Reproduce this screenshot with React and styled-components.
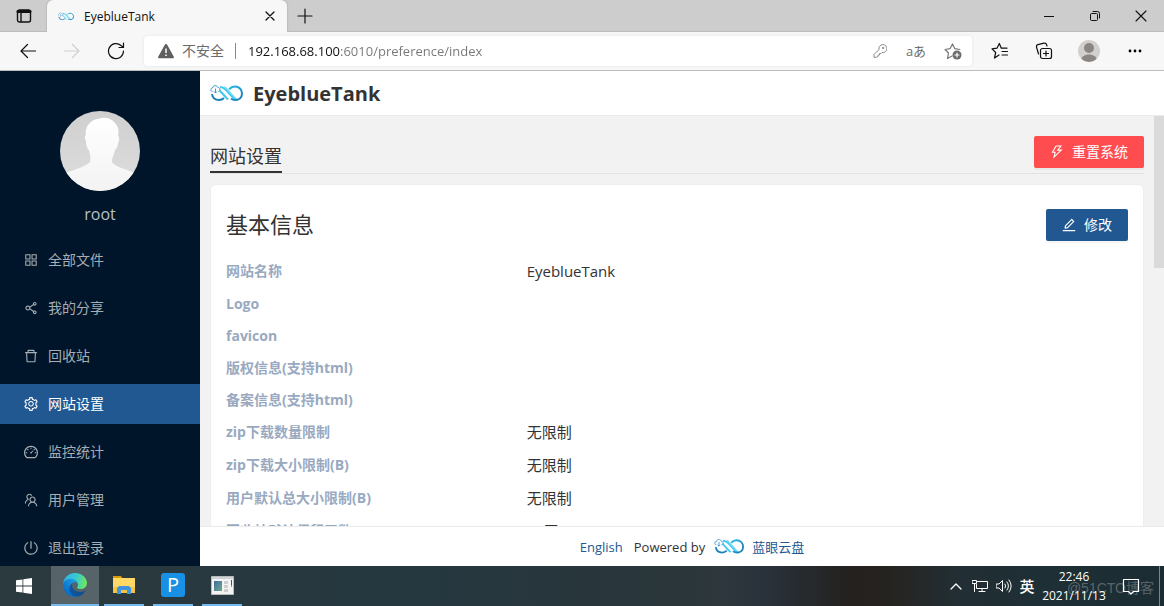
import React from "react";
import styled, { createGlobalStyle } from "styled-components";
import {
  AiOutlineAppstore,
  AiOutlineShareAlt,
  AiOutlineDelete,
  AiOutlineSetting,
  AiOutlineDashboard,
  AiOutlineTeam,
  AiOutlinePoweroff,
  AiOutlineThunderbolt,
  AiOutlineEdit
} from "react-icons/ai";

const GlobalStyle = createGlobalStyle`
  * {
    box-sizing: border-box;
  }
  body {
    margin: 0;
    font-family: "Open Sans", "Noto Sans CJK SC", sans-serif;
    font-size: 14px;
    color: #333;
  }
  button, input {
    font-family: inherit;
    border: 0;
    padding: 0;
    background: none;
    color: inherit;
  }
  svg {
    display: block;
    flex: none;
  }
  a {
    text-decoration: none;
  }
`;

const Screen = styled.div`
  display: flex;
  flex-direction: column;
  height: 100vh;
  overflow: hidden;
`;

/* browser */

const TabBar = styled.div`
  display: flex;
  flex: none;
  height: 32px;
  background: #cdcdcd;
  box-shadow: inset 0 -1px 0 #bcbcbc;
`;

const BarButton = styled.button`
  display: flex;
  align-items: center;
  justify-content: center;
  flex: none;
  width: ${props => props.$width}px;
  color: ${props => props.$color || "#111"};
`;

const Tab = styled.div`
  display: flex;
  align-items: center;
  width: 240px;
  padding: 0 6px 0 11px;
  background: #f7f7f7;
  border-radius: 6px 6px 0 0;
  box-shadow: 0 0 2px #999;
  font-size: 12px;
  color: #111;
  clip-path: inset(-3px -3px 0 -3px);
`;

const TabTitle = styled.span`
  flex: 1;
  margin-left: 10px;
`;

const Spacer = styled.div`
  flex: 1;
`;

const Toolbar = styled.div`
  display: flex;
  flex: none;
  height: 39px;
  padding: 0 6px;
  background: #f7f7f7;
  border-bottom: 1px solid #bdbdbd;
`;

const AddressBar = styled.div`
  display: flex;
  flex: 1;
  align-items: center;
  height: 30px;
  margin: 4px 6px;
  padding: 0 1px 0 14px;
  background: #fff;
  border-radius: 4px;
  box-shadow: 0 0 3px #e2e2e2;
`;

const Unsafe = styled.span`
  margin-left: 8px;
  padding-right: 11px;
  border-right: 1px solid #8a8a8a;
  line-height: 16px;
  color: #6b6b6b;
`;

const Url = styled.input`
  flex: 1;
  min-width: 0;
  margin-left: 12px;
  height: 24px;
  font-size: 13px;
  outline: 0;
  color: transparent;
  background: linear-gradient(90deg, #111 93px, #767676 93px);
  background-clip: text;
  -webkit-background-clip: text;
`;

const BarIcon = styled(BarButton)`
  height: 30px;
  font-size: 13px;
`;

/* page */

const Page = styled.div`
  display: flex;
  flex: 1;
  min-height: 0;
`;

const Sidebar = styled.aside`
  flex: none;
  width: 200px;
  overflow: hidden;
  background: #001529;
`;

const Profile = styled.div`
  display: flex;
  flex-direction: column;
  align-items: center;
  padding-top: 40px;
  height: 169px;
  font-size: 16px;
  line-height: 24px;
  color: #bbc0c5;
`;

const UserName = styled.div`
  margin-top: 11px;
`;

/* CJK glyphs sit low in their line box */
const Text = styled.span`
  padding-bottom: 2px;
`;

const MenuLink = styled.a`
  display: flex;
  align-items: center;
  gap: 9px;
  height: 40px;
  margin-bottom: 8px;
  padding-left: 23px;
  color: ${props => (props.$active ? "#fff" : "#a6adb4")};
  background: ${props => (props.$active ? "#215891" : "transparent")};
`;

const Content = styled.div`
  display: flex;
  flex: 1;
  flex-direction: column;
  min-width: 0;
`;

const SiteHeader = styled.header`
  display: flex;
  flex: none;
  align-items: center;
  gap: 10px;
  height: 45px;
  padding-left: 10px;
  background: #fff;
  border-bottom: 1px solid #ebebeb;
`;

const SiteName = styled.span`
  font-size: 20px;
  font-weight: 700;
`;

const Body = styled.div`
  display: flex;
  flex: 1;
  min-height: 0;
  background: #f2f2f2;
`;

const Main = styled.main`
  flex: 1;
  min-width: 0;
  padding: 20px 10px 0;
  overflow: hidden;
`;

const ScrollTrack = styled.div`
  width: 10px;
`;

const ScrollThumb = styled.div`
  height: 37%;
  background: #dadada;
`;

const TitleRow = styled.div`
  display: flex;
  justify-content: space-between;
  height: 38px;
  border-bottom: 1px solid #e3e3e3;
`;

const Title = styled.h1`
  align-self: flex-end;
  margin: 0;
  padding-bottom: 2px;
  border-bottom: 2px solid #333;
  font-size: 18px;
  font-weight: 400;
  line-height: 26px;
`;

const Button = styled.button`
  display: flex;
  align-items: center;
  gap: 7px;
  height: 32px;
  padding: 0 16px 0 15px;
  border-radius: 2px;
  background: ${props => (props.$danger ? "#ff4d4f" : "#215891")};
  color: #fff;
  font-size: 14px;
  box-shadow: 0 2px 0 rgba(0, 0, 0, 0.04);
`;

const Card = styled.section`
  margin-top: 10px;
  padding: 24px 15px;
  background: #fff;
  border: 1px solid #eee;
  border-radius: 6px;
`;

const CardHead = styled.div`
  display: flex;
  align-items: center;
  justify-content: space-between;
  margin-bottom: 14px;
`;

const CardTitle = styled.h2`
  margin: 0;
  padding-bottom: 2px;
  font-size: 22px;
  font-weight: 400;
  line-height: 30px;
`;

const InfoList = styled.dl`
  margin: 0;
`;

const InfoRow = styled.div`
  display: grid;
  grid-template-columns: 1fr 2fr;
  padding: 5px 0;
`;

const InfoLabel = styled.dt`
  font-weight: 700;
  line-height: 22px;
  color: #99a9bf;
`;

const InfoValue = styled.dd`
  margin: 0;
  font-size: 15px;
  line-height: 23px;
`;

const Footer = styled.footer`
  display: flex;
  flex: none;
  align-items: center;
  justify-content: center;
  height: 40px;
  padding-left: 20px;
  background: #fff;
  border-top: 1px solid #ebebeb;
  font-size: 13px;
`;

const FooterLink = styled.a`
  display: flex;
  align-items: center;
  gap: 8px;
  color: #215891;
`;

const Powered = styled.span`
  margin: 0 9px 0 11px;
`;

/* taskbar */

const Taskbar = styled.div`
  position: relative;
  display: flex;
  flex: none;
  height: 40px;
  color: #fff;
  background: linear-gradient(
    90deg,
    #2b3a3e 0%,
    #25373f 36%,
    #2a363a 58%,
    #2d373c 62%,
    #29313a 66%,
    #24211f 73%,
    #26231f 76%,
    #222e33 82%,
    #1e2f36 90%,
    #1c2c33 100%
  );
`;

const StartButton = styled(BarButton)`
  margin-right: 3px;
`;

const Task = styled.button`
  display: flex;
  flex-direction: column;
  align-items: center;
  width: 48px;
  height: 40px;
  margin-right: 1px;
  background: ${props => (props.$active ? "#56646a" : "transparent")};

  &::after {
    content: "";
    width: ${props => (props.$active ? 48 : 40)}px;
    height: 2px;
    background: #76b9ed;
  }
`;

const TaskIcon = styled.span`
  display: flex;
  flex: 1;
  align-items: center;
`;

const Clock = styled.div`
  width: 72px;
  font-size: 12px;
  line-height: 19px;
  padding-top: 1px;
  text-align: center;
`;

const Ime = styled(BarButton)`
  padding-bottom: 2px;
  font-size: 15px;
  font-weight: 500;
`;

const ShowDesktop = styled.button`
  width: 5px;
  margin-left: 7px;
  border-left: 1px solid #7c868a;
`;

const Watermark = styled.span`
  position: absolute;
  right: 10px;
  bottom: 8px;
  font-family: "Liberation Sans", "Noto Sans CJK SC", sans-serif;
  font-size: 14px;
  line-height: 20px;
  color: rgba(255, 255, 255, 0.27);
  pointer-events: none;
`;

const Logo = ({ width, id }) => (
  <svg width={width} viewBox="0 0 66 36" fill="none" strokeWidth="4">
    <defs>
      <linearGradient id={id} x1="0" x2="1" y1="0" y2="1">
        <stop offset="0" stopColor="#2cc0ee" />
        <stop offset="1" stopColor="#1673ae" />
      </linearGradient>
    </defs>
    <path d="M4 20c1 8 7 12 14 12 4 0 7-1 10-4" stroke="#1b82b9" />
    <path d="M20 6c5 0 8 2 11 5l14 15c3 3 6 6 10 6" stroke="#3fcaf0" />
    <path d="M29 5l22 24" stroke="#6fdaf7" strokeWidth="3" />
    <path d="M19 13l17 18" stroke="#3fcaf0" strokeWidth="4" />
    <path d="M38 11c3-4 7-6 12-6 8 0 14 6 14 14s-6 13-14 13c-3 0-5 0-8-3" stroke={`url(#${id})`} />
    <path
      d="M5 15c-5-1-4-7 0-7 1-6 9-6 11-1 5 0 5 7 1 8M11 9v9m-3-3l3 3 3-3"
      stroke="#3a97cf"
      strokeWidth="2"
    />
  </svg>
);

const Avatar = () => (
  <svg width="80" height="80" viewBox="0 0 80 80">
    <defs>
      <clipPath id="face">
        <circle cx="40" cy="40" r="40" />
      </clipPath>
      <linearGradient id="faceBg" x2="0" y2="1">
        <stop offset="0" stopColor="#cfcfcf" />
        <stop offset="1" stopColor="#dedede" />
      </linearGradient>
      <linearGradient id="faceFg" x2="0" y2="1">
        <stop offset="0" stopColor="#fff" />
        <stop offset="1" stopColor="#f3f3f3" />
      </linearGradient>
    </defs>
    <g clipPath="url(#face)">
      <path fill="url(#faceBg)" d="M0 0h80v80H0z" />
      <path
        fill="url(#faceFg)"
        d="M31 11C34 8 38 8 42 7c5-1 10 1 13 5 4 4 4 9 3 13 2 1 1 5 0 8 0 3-2 5-3 6-1 5-3 7-3 12 3 5 12 6 20 10l8 5v14H0V67l8-6c8-3 17-5 22-10 1-4 0-8-1-12-2-1-3-5-3-9-1-2-2-5 0-6-1-5 1-10 5-13z"
      />
    </g>
  </svg>
);

const Line = ({ size = 16, sw = 1, d, children }) => (
  <svg
    width={size}
    height={size}
    viewBox={`0 0 ${size} ${size}`}
    fill="none"
    stroke="currentColor"
    strokeWidth={sw}
    strokeLinecap="round"
    strokeLinejoin="round"
  >
    <path d={d} />
    {children}
  </svg>
);

const EdgeIcon = () => (
  <svg width="24" height="24" viewBox="0 0 256 256">
    <defs>
      <linearGradient id="edgeA" x1="60" x2="240" y1="177" y2="177" gradientUnits="userSpaceOnUse">
        <stop offset="0" stopColor="#0c59a4" />
        <stop offset="1" stopColor="#114a8b" />
      </linearGradient>
      <linearGradient id="edgeB" x1="150" x2="45" y1="100" y2="220" gradientUnits="userSpaceOnUse">
        <stop offset="0" stopColor="#1b9de2" />
        <stop offset="1" stopColor="#0a6cc6" />
      </linearGradient>
      <linearGradient id="edgeC" x1="10" x2="250" y1="60" y2="110" gradientUnits="userSpaceOnUse">
        <stop offset="0" stopColor="#2fb5ea" />
        <stop offset="0.5" stopColor="#37c8d0" />
        <stop offset="1" stopColor="#6cea5c" />
      </linearGradient>
    </defs>
    <path
      fill="url(#edgeA)"
      d="M231 190.500a94 94 0 0 1-10.500 4.700 102 102 0 0 1-35.900 6.500c-47.300 0-88.500-32.500-88.500-74.300a31.500 31.500 0 0 1 16.400-27.300c-42.800 1.800-53.800 46.400-53.800 72.500 0 73.900 68.100 81.400 82.800 81.400 7.900 0 19.800-2.300 27-4.600l1.300-.4a128 128 0 0 0 66.600-52.800 4 4 0 0 0-5.400-5.700z"
    />
    <path
      fill="url(#edgeB)"
      d="M105.700 241.400a79 79 0 0 1-22.700-21.300 80.700 80.700 0 0 1 29.500-120c3.200-1.500 8.500-4.100 15.600-4a32.400 32.400 0 0 1 25.700 13 31.900 31.900 0 0 1 6.300 18.700c0-.2 24.500-79.600-80-79.600-43.900 0-80 41.600-80 78.200a130 130 0 0 0 12.100 56 128 128 0 0 0 156.400 67 75.500 75.500 0 0 1-62.900-8z"
    />
    <path
      fill="url(#edgeC)"
      d="M152.300 148.900c-.8 1-3.300 2.500-3.300 5.700 0 2.600 1.700 5.100 4.700 7.200 14.400 10 41.500 8.700 41.600 8.700a59.600 59.600 0 0 0 30.300-8.300 61.400 61.400 0 0 0 30.400-52.900c.3-22.400-8-37.300-11.300-43.900C223.500 23.900 177.700 0 128 0A128 128 0 0 0 0 126.200c.5-36.500 36.800-66 80-66 3.500 0 23.500.3 42 10.100 16.300 8.600 24.900 19 30.800 29.200 6.200 10.700 7.300 24.100 7.300 29.500 0 5.300-2.700 13.300-7.800 19.900z"
    />
  </svg>
);

const FolderIcon = () => (
  <svg width="22" height="20" viewBox="0 0 22 20">
    <path fill="#d99a06" d="M0 1h8l2 3h-10z" />
    <path fill="#ffd866" d="M0 3h22v15H0z" />
    <path fill="#f5c443" d="M0 12h22v6H0z" />
    <path fill="#3f94e0" d="M4 19v-6l2-2h10l2 2v6h-4v-4H8v4z" />
  </svg>
);

const PIcon = () => (
  <svg width="24" height="24" viewBox="0 0 24 24">
    <rect width="24" height="24" rx="3" fill="#1790e6" />
    <text x="12" y="19" textAnchor="middle" fontSize="20" fill="#fff">
      P
    </text>
  </svg>
);

const WindowIcon = () => (
  <svg width="23" height="19" viewBox="0 0 23 19">
    <defs>
      <linearGradient id="shot" x2="1" y2="1">
        <stop offset="0" stopColor="#3f6fa0" />
        <stop offset="1" stopColor="#6fa98a" />
      </linearGradient>
    </defs>
    <path fill="#f3f3f3" stroke="#bbb" d="M.5.5h22v18H.5z" />
    <path fill="#cfd4d8" d="M1 1h21v2H1z" />
    <path fill="url(#shot)" d="M3 5h8v10H3z" />
    <path fill="#cfcfcf" d="M13 5h4v3h-4zM13 9h4v3h-4zM13 13h4v3h-4z" />
    <path fill="#33566e" d="M20 4h1v6h-1z" />
    <path fill="#55b56b" d="M20 9h1v2h-1z" />
  </svg>
);

const menus = [
  { name: "全部文件", icon: AiOutlineAppstore },
  { name: "我的分享", icon: AiOutlineShareAlt },
  { name: "回收站", icon: AiOutlineDelete },
  { name: "网站设置", icon: AiOutlineSetting, active: true },
  { name: "监控统计", icon: AiOutlineDashboard },
  { name: "用户管理", icon: AiOutlineTeam },
  { name: "退出登录", icon: AiOutlinePoweroff }
];

const infos = [
  { label: "网站名称", value: "EyeblueTank" },
  { label: "Logo" },
  { label: "favicon" },
  { label: "版权信息(支持html)" },
  { label: "备案信息(支持html)" },
  { label: "zip下载数量限制", value: "无限制" },
  { label: "zip下载大小限制(B)", value: "无限制" },
  { label: "用户默认总大小限制(B)", value: "无限制" },
  { label: "回收站默认保留天数", value: "30天" }
];

function Browser() {
  return (
    <>
      <TabBar>
        <BarButton $width={47} aria-label="Tab actions">
          <Line d="M1.500 4a2 2 0 0 1 2-2h9a2 2 0 0 1 2 2v8a2 2 0 0 1-2 2h-9a2 2 0 0 1-2-2zM5 5v9" sw={1.4}>
            <path d="M2 3.500h12" strokeWidth="3" />
          </Line>
        </BarButton>
        <Tab>
          <Logo width={16} id="tabLogo" />
          <TabTitle>EyeblueTank</TabTitle>
          <BarButton $width={22} aria-label="Close tab">
            <Line size={10} sw={1.3} d="M1 1l8 8M9 1l-8 8" />
          </BarButton>
        </Tab>
        <BarButton $width={36} aria-label="New tab">
          <Line d="M8 1v14M1 8h14" sw={1.2} />
        </BarButton>
        <Spacer />
        <BarButton $width={46} aria-label="Minimize">
          <Line size={10} d="M0 5.500h10" />
        </BarButton>
        <BarButton $width={46} aria-label="Restore">
          <Line size={12} d="M1.500 4.500a1 1 0 0 1 1-1h5a1 1 0 0 1 1 1v5a1 1 0 0 1-1 1h-5a1 1 0 0 1-1-1zM4 1.500h4.500a2 2 0 0 1 2 2V8" />
        </BarButton>
        <BarButton $width={46} aria-label="Close">
          <Line size={12} d="M1 1l10 10M11 1L1 11" sw={1.1} />
        </BarButton>
      </TabBar>
      <Toolbar>
        <BarButton $width={44} aria-label="Back">
          <Line d="M15.500 8H1M7.500 1.500L1 8l6.500 6.500" sw={1.2} />
        </BarButton>
        <BarButton $width={44} $color="#cfcfcf" aria-label="Forward">
          <Line d="M.5 8H15M8.500 1.500L15 8l-6.500 6.500" sw={1.2} />
        </BarButton>
        <BarButton $width={44} aria-label="Refresh">
          <Line size={18} d="M16.500 9A7.500 7.500 0 1 1 14 3.500l2 1.500M16.500 1v4.500H12" sw={1.2} />
        </BarButton>
        <AddressBar>
          <svg width="16" height="16" viewBox="0 0 16 16">
            <path fill="#5f5f5f" d="M8 1c.6 0 1 .3 1.200.700l6.600 12c.4.800-.1 1.600-1 1.600H1.200c-.9 0-1.400-.8-1-1.600l6.600-12C7 1.300 7.400 1 8 1z" />
            <path stroke="#fff" strokeWidth="1.500" d="M8 5.500v4.500M8 11.500v1.500" />
          </svg>
          <Unsafe>不安全</Unsafe>
          <Url aria-label="Address" defaultValue="192.168.68.100:6010/preference/index" />
          <BarIcon $width={36} $color="#8a8a8a" aria-label="Passwords">
            <Line size={14} d="M1 13v-2.500l5-5A4 4 0 1 1 9 8.500l-1 1H6.500V11H5v1.500L4 13z">
              <circle cx="10" cy="4" r=".7" />
            </Line>
          </BarIcon>
          <BarIcon $width={36} $color="#6e6e6e" aria-label="Translate">
            <Text>aあ</Text>
          </BarIcon>
          <BarIcon $width={37} $color="#777" aria-label="Add to favorites">
            <Line size={18} d="M8 14l-4.500 2.500 1-5.500L1 7.500l5-.8L8.500 2l2.300 4.700 5 .8" sw={1.200}>
              <circle cx="13" cy="13" r="4.500" fill="#6b6b6b" stroke="none" />
              <path d="M13 11v4M11 13h4" stroke="#fff" />
            </Line>
          </BarIcon>
        </AddressBar>
        <BarButton $width={44} aria-label="Favorites">
          <Line size={18} d="M8 13l-4.500 3 1.200-5.500L1 6.800l5-.6L8.300 1.500l2 4.700H16M11 9.500h5.500M11 13h5.500" sw={1.2} />
        </BarButton>
        <BarButton $width={44} aria-label="Collections">
          <Line size={18} d="M7.500 6.500h7a2 2 0 0 1 2 2v6a2 2 0 0 1-2 2h-7a2 2 0 0 1-2-2v-6a2 2 0 0 1 2-2zM11 9v5M8.500 11.500h5M3.500 12L1.500 5a2 2 0 0 1 1.400-2.300L9 1.200A2 2 0 0 1 11.500 2.500L12 4" sw={1.200} />
        </BarButton>
        <BarButton $width={46} aria-label="Profile">
          <svg width="22" height="22" viewBox="0 0 22 22">
            <circle cx="11" cy="11" r="11" fill="#d2d0ce" />
            <circle cx="11" cy="8" r="5" fill="#8a8683" />
            <path d="M3.500 19c1-6 14-6 15 0a11 11 0 0 1-15 0z" fill="#8a8683" />
          </svg>
        </BarButton>
        <BarButton $width={46} aria-label="More">
          <svg width="14" height="4" viewBox="0 0 14 4">
            <circle cx="2" cy="2" r="1.400" />
            <circle cx="7" cy="2" r="1.400" />
            <circle cx="12" cy="2" r="1.400" />
          </svg>
        </BarButton>
      </Toolbar>
    </>
  );
}

function Preference() {
  return (
    <Main>
      <TitleRow>
        <Title>网站设置</Title>
        <Button $danger>
          <AiOutlineThunderbolt size={16} />
          <Text>重置系统</Text>
        </Button>
      </TitleRow>
      <Card>
        <CardHead>
          <CardTitle>基本信息</CardTitle>
          <Button>
            <AiOutlineEdit size={16} />
            <Text>修改</Text>
          </Button>
        </CardHead>
        <InfoList>
          {infos.map(info => (
            <InfoRow key={info.label}>
              <InfoLabel>{info.label}</InfoLabel>
              {info.value && <InfoValue>{info.value}</InfoValue>}
            </InfoRow>
          ))}
        </InfoList>
      </Card>
    </Main>
  );
}

function WindowsBar() {
  return (
    <Taskbar>
      <StartButton $width={48} $color="#fff" aria-label="Start">
        <svg width="16" height="16" viewBox="0 0 16 16" fill="#fff">
          <path d="M0 2.300l6.500-.9v6.200H0zM7.300 1.300L16 0v7.600H7.300zM0 8.400h6.500v6.200L0 13.700zM7.300 8.400H16V16l-8.700-1.300z" />
        </svg>
      </StartButton>
      <Task $active aria-label="Edge">
        <TaskIcon><EdgeIcon /></TaskIcon>
      </Task>
      <Task aria-label="Explorer">
        <TaskIcon><FolderIcon /></TaskIcon>
      </Task>
      <Task aria-label="P">
        <TaskIcon><PIcon /></TaskIcon>
      </Task>
      <Task aria-label="Viewer">
        <TaskIcon><WindowIcon /></TaskIcon>
      </Task>
      <Spacer />
      <BarButton $width={24} $color="#fff" aria-label="Hidden icons">
        <Line size={12} d="M1 9l5-5 5 5" sw={1.300} />
      </BarButton>
      <BarButton $width={24} $color="#fff" aria-label="Network">
        <Line d="M5.500 3.500h10v7h-11V6.500M10 10.500v3M7 13.500h6M.5 2.500h4v3h-4zM2.500 6v7.500" />
      </BarButton>
      <BarButton $width={24} $color="#fff" aria-label="Volume">
        <Line d="M.5 6h2.500L6.500 2.500v11L3 10H.5zM9 6q1.500 2 0 4M11 4q3 4 0 8M13 2q4.500 6 0 12" />
      </BarButton>
      <Ime $width={22} $color="#fff">英</Ime>
      <Clock>
        22:46
        <br />
        2021/11/13
      </Clock>
      <BarButton $width={42} $color="#fff" aria-label="Notifications">
        <Line size={18} d="M1.500 2.500h15v12h-5L9 17l-2.500-2.500h-5z" sw={1.200} />
      </BarButton>
      <ShowDesktop aria-label="Show desktop" />
      <Watermark>@51CTO博客</Watermark>
    </Taskbar>
  );
}

function App() {
  return (
    <Screen>
      <GlobalStyle />
      <Browser />
      <Page>
        <Sidebar>
          <Profile>
            <Avatar />
            <UserName>root</UserName>
          </Profile>
          <nav>
            {menus.map(({ name, icon: Icon, active }) => (
              <MenuLink key={name} href="#" $active={active}>
                <Icon size={16} />
                <Text>{name}</Text>
              </MenuLink>
            ))}
          </nav>
        </Sidebar>
        <Content>
          <SiteHeader>
            <Logo width={33} id="headLogo" />
            <SiteName>EyeblueTank</SiteName>
          </SiteHeader>
          <Body>
            <Preference />
            <ScrollTrack>
              <ScrollThumb />
            </ScrollTrack>
          </Body>
          <Footer>
            <FooterLink href="#">English</FooterLink>
            <Powered>Powered by</Powered>
            <FooterLink href="#">
              <Logo width={30} id="footLogo" />
              蓝眼云盘
            </FooterLink>
          </Footer>
        </Content>
      </Page>
      <WindowsBar />
    </Screen>
  );
}

export default App;
